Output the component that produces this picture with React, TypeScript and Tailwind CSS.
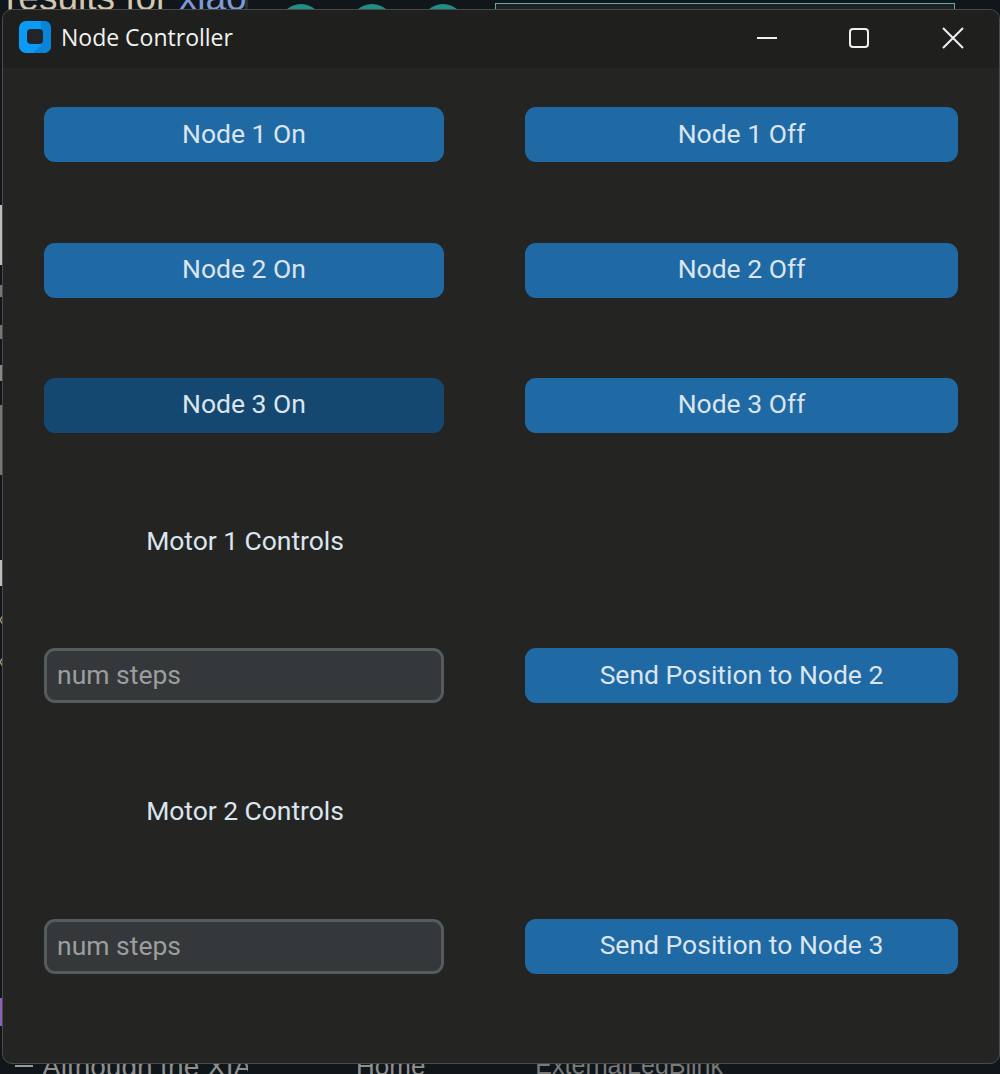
const btn =
  "h-[55px] w-full rounded-[11px] pb-[2px] text-[26.5px] leading-none text-[#dce4ee] flex items-center justify-center"

function Btn({ label, dark }: { label: string; dark?: boolean }) {
  return <button className={`${btn} ${dark ? "bg-[#144870]" : "bg-[#1f6aa5]"}`}>{label}</button>
}

function StepsInput() {
  return (
    <input
      placeholder="num steps"
      className="h-[55px] w-full rounded-[11px] border-[3px] border-[#565b5e] bg-[#34383a] px-[10px] pb-[2px] text-[26.5px] text-[#dce4ee] placeholder:text-[#9c9e9e] outline-none"
    />
  )
}

function Label({ text }: { text: string }) {
  return <div className="flex h-[55px] items-center justify-center pl-[2px] text-[26.5px] tracking-[-0.05px] text-[#dce4ee]">{text}</div>
}

// stuff from the other windows peeking out behind the app
function Backdrop() {
  return (
    <div className="absolute inset-0 overflow-hidden bg-[#10161a] font-['Liberation_Sans',sans-serif]">
      <div className="absolute inset-x-0 top-0 flex h-[24px] items-start overflow-hidden pl-[6px]">
        <div className="-mt-[21px] w-[239px] whitespace-nowrap text-[37px] leading-none text-[#d3c7ad]">
          results for <span className="text-[#7f9ad6]">xiao</span>
        </div>
        <div className="h-[10px] w-[3px] bg-[#2b3034]" />
        <div className="ml-[31px] mt-[4px] flex gap-[27px]">
          <div className="h-[44px] w-[44px] rounded-full bg-[#1f8f88]" />
          <div className="h-[44px] w-[44px] rounded-full bg-[#1f8f88]" />
          <div className="h-[44px] w-[44px] rounded-full bg-[#1f8f88]" />
        </div>
        <div className="ml-[30px] mt-[3px] h-[20px] w-[460px] border border-[#5fa8a4] bg-[#1b2226]" />
      </div>
      <div className="absolute left-0 top-[205px] flex w-[3px] flex-col">
        <div className="h-[60px] bg-[#bdbdbd]" />
        <div className="mt-[20px] h-[12px] bg-[#777]" />
        <div className="mt-[28px] h-[14px] bg-[#777]" />
        <div className="mt-[26px] h-[16px] bg-[#888]" />
        <div className="mt-[24px] h-[70px] bg-[#777]" />
        <div className="mt-[85px] h-[26px] bg-[#bdbdbd]" />
        <svg width="4" height="60" viewBox="0 0 4 60" className="mt-[26px]">
          <path d="M4 2L0 8l4 6M4 44L0 50l4 6" fill="none" stroke="#a89468" strokeWidth="1.5" />
        </svg>
        <div className="mt-[326px] h-[28px] bg-[#8a63b8]" />
      </div>
      <div className="absolute inset-x-0 top-[1053px] flex items-start pl-[15px] text-[#8f8f8f]">
        <div className="mt-[12px] h-[2px] w-[18px] bg-[#9a9a9a]" />
        <div className="ml-[9px] w-[206px] overflow-hidden whitespace-nowrap text-[28px] leading-none">
          Although the XIAO
        </div>
        <div className="ml-[108px] text-[26px] leading-none">Home</div>
        <div className="ml-[110px] text-[25px] leading-none text-[#7a7a7a]">ExternalLegBlink</div>
      </div>
    </div>
  )
}

export default function App() {
  return (
    <div className="relative h-[1074px] w-[1000px] overflow-hidden">
      <Backdrop />
      {/* app window */}
      <div className="absolute left-[2px] top-[9px] flex h-[1055px] w-[998px] flex-col overflow-hidden rounded-[10px] border border-[#4a4b4a] bg-[#242423] font-['Roboto',sans-serif]">
        <div className="flex h-[58px] shrink-0 items-center bg-[#1f201e] pl-[16px]">
          <svg width="32" height="32" viewBox="0 0 32 32" className="mb-[4px]">
            <rect width="32" height="32" rx="7" fill="#0a9bf7" />
            <path d="M22 0h3a7 7 0 0 1 7 7v18a7 7 0 0 1-7 7H14l8-8z" fill="#0a84d6" />
            <rect x="8" y="8" width="16" height="15" rx="4" fill="#20262b" />
          </svg>
          <span className="mb-[3px] ml-[10px] font-['Open_Sans',sans-serif] text-[23px] text-[#f2f2f2]">
            Node Controller
          </span>
          <div className="mb-[2px] ml-auto flex items-center text-[#f0f0f0]">
            <svg width="22" height="22" viewBox="0 0 22 22" className="mr-[70px]">
              <path d="M1 11h20" stroke="currentColor" strokeWidth="2" />
            </svg>
            <svg width="22" height="22" viewBox="0 0 22 22" className="mr-[71px]">
              <rect x="2" y="2" width="18" height="18" rx="3" fill="none" stroke="currentColor" strokeWidth="2" />
            </svg>
            <svg width="24" height="24" viewBox="0 0 24 24" className="mr-[34px]">
              <path d="M2 2l20 20M22 2L2 22" stroke="currentColor" strokeWidth="2" />
            </svg>
          </div>
        </div>
        <div className="ml-[41px] mt-[39.4px] grid w-[914px] grid-cols-[400px_433px] gap-x-[81px] gap-y-[80.25px]">
          <Btn label="Node 1 On" />
          <Btn label="Node 1 Off" />
          <Btn label="Node 2 On" />
          <Btn label="Node 2 Off" />
          <Btn label="Node 3 On" dark />
          <Btn label="Node 3 Off" />
          <Label text="Motor 1 Controls" />
          <div />
          <StepsInput />
          <Btn label="Send Position to Node 2" />
          <Label text="Motor 2 Controls" />
          <div />
          <StepsInput />
          <Btn label="Send Position to Node 3" />
        </div>
      </div>
    </div>
  )
}
